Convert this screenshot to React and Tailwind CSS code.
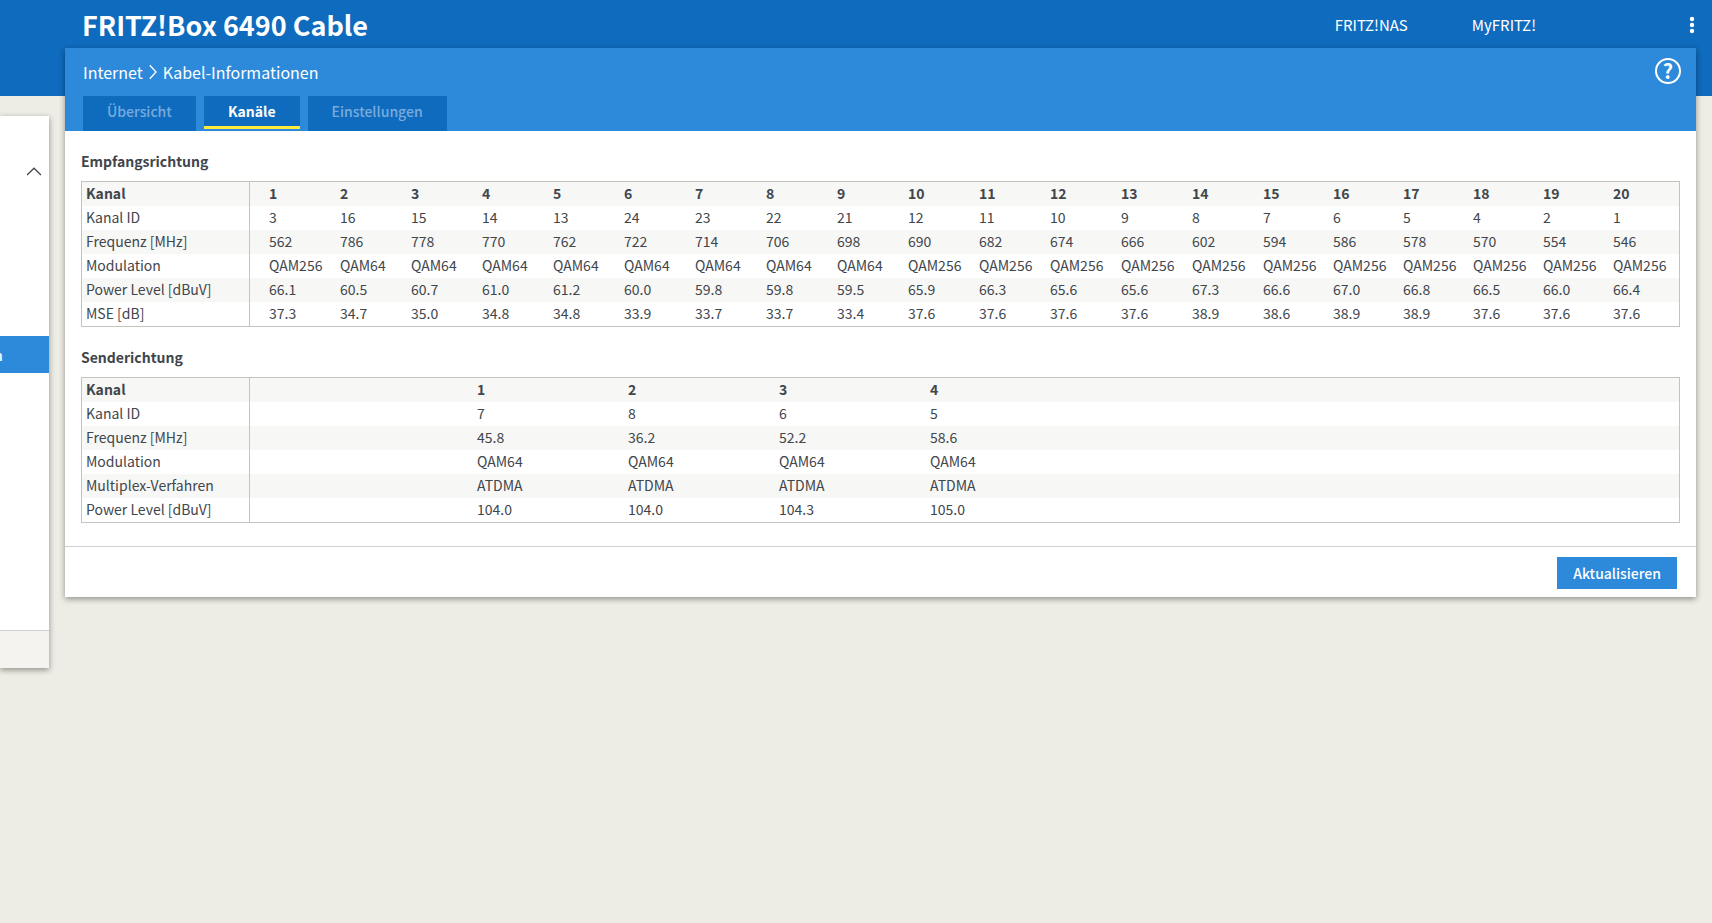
const tabs = [
  { label: 'Übersicht', active: false },
  { label: 'Kanäle', active: true },
  { label: 'Einstellungen', active: false },
];

const downstream = [
  ['Kanal ID', '3 16 15 14 13 24 23 22 21 12 11 10 9 8 7 6 5 4 2 1'],
  ['Frequenz [MHz]', '562 786 778 770 762 722 714 706 698 690 682 674 666 602 594 586 578 570 554 546'],
  ['Modulation', 'QAM256 QAM64 QAM64 QAM64 QAM64 QAM64 QAM64 QAM64 QAM64 QAM256 QAM256 QAM256 QAM256 QAM256 QAM256 QAM256 QAM256 QAM256 QAM256 QAM256'],
  ['Power Level [dBuV]', '66.1 60.5 60.7 61.0 61.2 60.0 59.8 59.8 59.5 65.9 66.3 65.6 65.6 67.3 66.6 67.0 66.8 66.5 66.0 66.4'],
  ['MSE [dB]', '37.3 34.7 35.0 34.8 34.8 33.9 33.7 33.7 33.4 37.6 37.6 37.6 37.6 38.9 38.6 38.9 38.9 37.6 37.6 37.6'],
];

const upstream = [
  ['Kanal ID', '7 8 6 5'],
  ['Frequenz [MHz]', '45.8 36.2 52.2 58.6'],
  ['Modulation', 'QAM64 QAM64 QAM64 QAM64'],
  ['Multiplex-Verfahren', 'ATDMA ATDMA ATDMA ATDMA'],
  ['Power Level [dBuV]', '104.0 104.0 104.3 105.0'],
];

// the last columns share whatever width is left
const downstreamColumn = (n) => (n < 15 ? 'w-[71px]' : undefined);
const upstreamColumn = () => 'w-[151px]';

function ChannelTable({ id, title, rows, count, spacerClass, columnClass, trailing }) {
  const channels = Array.from({ length: count }, (_, i) => i + 1);

  return (
    <section aria-labelledby={id}>
      <h2 id={id} className="mb-2 text-[14px] leading-6 font-bold">{title}</h2>
      <div className="border border-[#c3c4be]">
        <table className="w-full table-fixed border-separate border-spacing-0 text-left text-[14px] leading-[22px]">
          <colgroup>
            <col className="w-[168px]" />
            <col className={spacerClass} />
            {channels.map((n) => <col key={n} className={columnClass(n)} />)}
            {trailing && <col />}
          </colgroup>
          <thead>
            <tr className="h-6 bg-[#f7f7f5] align-top">
              <th scope="row" className="border-r border-[#c3c4be] p-0 pl-1 font-bold">Kanal</th>
              <td className="p-0" />
              {channels.map((n) => <th key={n} scope="col" className="p-0 pl-1 font-bold">{n}</th>)}
              {trailing && <td className="p-0" />}
            </tr>
          </thead>
          <tbody>
            {rows.map(([label, values]) => (
              <tr key={label} className="h-6 align-top even:bg-[#f7f7f5]">
                <th scope="row" className="border-r border-[#c3c4be] p-0 pl-1 font-normal">{label}</th>
                <td className="p-0" />
                {values.split(' ').map((value, i) => <td key={i} className="p-0 pl-1">{value}</td>)}
                {trailing && <td className="p-0" />}
              </tr>
            ))}
          </tbody>
        </table>
      </div>
    </section>
  );
}

function Sidebar() {
  return (
    <nav className="mt-[68px] w-[49px] shrink-0 self-start overflow-hidden bg-white shadow-[0_2px_6px_rgba(0,0,0,0.4)]">
      <button type="button" aria-label="Menü einklappen" className="mt-[43px] flex h-6 w-full items-center justify-end pr-[7px]">
        <svg width="16" height="9" viewBox="0 0 16 9" fill="none" stroke="currentColor" strokeWidth="1.2">
          <path d="M1 8 8 1.2 15 8" />
        </svg>
      </button>
      <a href="#kabel" className="mt-[153px] flex h-[37px] items-center bg-[#2d8adb] pt-0.5 text-[14px] font-medium text-white">
        <span className="-ml-1.5">n</span>
      </a>
      <div className="mt-[257px] h-[38px] border-t border-[#cfcfcf] bg-[#f4f3f0]" />
    </nav>
  );
}

export default function App() {
  return (
    <div className="min-h-screen bg-[#edede5] bg-linear-to-b from-[#0f6bbd] to-[#0f6bbd] bg-[length:100%_96px] bg-no-repeat font-['Noto_Sans_CJK_SC','Open_Sans',sans-serif] text-[#3f464c]">
      <header className="flex h-12 items-center pt-0.5 pr-3 pl-[82px] text-white">
        <h1 className="text-[27px] leading-9 font-bold">FRITZ!Box 6490 Cable</h1>
        <div className="ml-auto flex items-center text-[15px] leading-6">
          <a href="#nas" className="mr-16">FRITZ!NAS</a>
          <a href="#myfritz" className="mr-[148px]">MyFRITZ!</a>
          <button type="button" aria-label="Menü" className="flex w-4 justify-center">
            <svg width="6" height="18" viewBox="0 0 6 18" fill="currentColor">
              <circle cx="3" cy="3" r="2.2" />
              <circle cx="3" cy="9" r="2.2" />
              <circle cx="3" cy="15" r="2.2" />
            </svg>
          </button>
        </div>
      </header>

      <div className="flex gap-4 pr-4">
        <Sidebar />

        <main className="min-w-0 flex-1 self-start bg-white shadow-[0_2px_6px_rgba(0,0,0,0.4)]">
          <div className="bg-[#2d8adb] pr-[15px] pl-[18px] text-white">
            <div className="flex h-12 items-start justify-between pt-2.5">
              <div className="flex items-center text-[16px] leading-7">
                <a href="#internet">Internet</a>
                <svg className="mx-[6px]" width="8" height="16" viewBox="0 0 8 16" fill="none" stroke="currentColor" strokeWidth="1.3">
                  <path d="M.8 1.2 7 8 .8 14.8" />
                </svg>
                <span>Kabel-Informationen</span>
              </div>
              <button type="button" aria-label="Hilfe" className="flex size-[26px] items-center justify-center rounded-full border-2 border-white text-[20px] leading-none font-bold">?</button>
            </div>
            <div className="flex h-[35px] items-start gap-2 text-[14px] leading-[30px]">
              {tabs.map(({ label, active }) => (
                <button
                  key={label}
                  type="button"
                  className={active
                    ? 'h-[33px] border-b-3 border-[#ffeb3b] bg-[#0f6bbd] px-6 font-bold'
                    : 'h-[35px] bg-[#0f6bbd] px-6 pb-1.5 font-medium text-[#77abde]'}
                >
                  {label}
                </button>
              ))}
            </div>
          </div>

          <div className="flex flex-col gap-[18px] px-4 pt-[18px] pb-[23px]">
            <ChannelTable id="downstream" title="Empfangsrichtung" rows={downstream} count={20} spacerClass="w-[15px]" columnClass={downstreamColumn} />
            <ChannelTable id="upstream" title="Senderichtung" rows={upstream} count={4} spacerClass="w-[223px]" columnClass={upstreamColumn} trailing />
          </div>

          <footer className="flex justify-end border-t border-[#cfcfcf] pt-2.5 pr-[19px] pb-2">
            <button type="button" className="h-8 bg-[#2d8adb] px-4 text-[14px] leading-8 font-medium text-white">Aktualisieren</button>
          </footer>
        </main>
      </div>
    </div>
  );
}
